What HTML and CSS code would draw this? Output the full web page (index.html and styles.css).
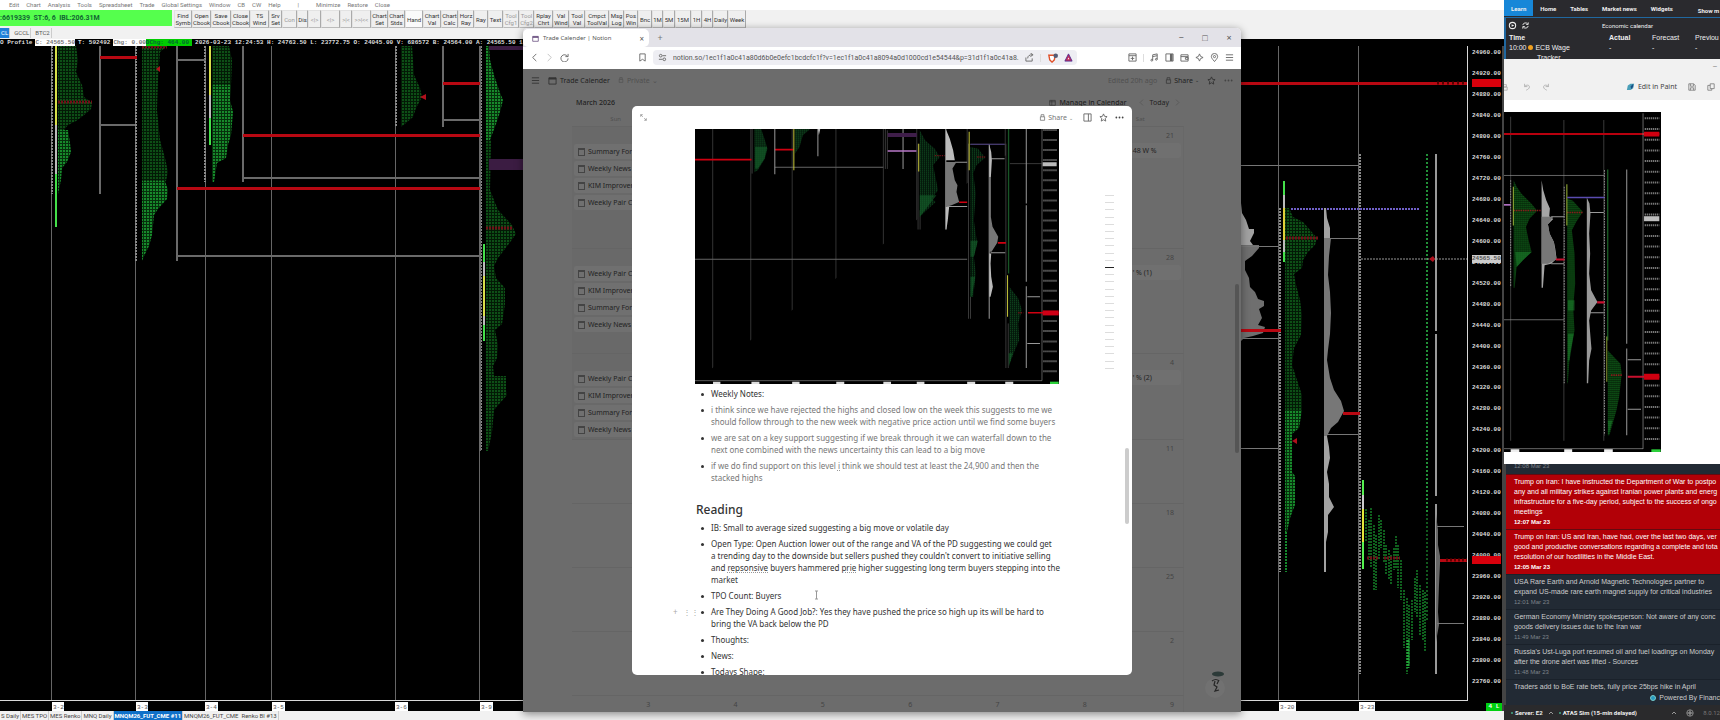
FILE: index.html
```html
<!DOCTYPE html>
<html lang="en">
<head>
    <meta charset="UTF-8">
    <meta name="viewport" content="width=device-width, initial-scale=1.0">
    <title>Trade Calender | Notion</title>
    <link rel="stylesheet" href="styles.css">
</head>
<body>
    <!-- Charting platform -->
    <main class="platform">
        <nav class="menubar">
            <a href="#">Edit</a><a href="#">Chart</a><a href="#">Analysis</a><a href="#">Tools</a><a href="#">Spreadsheet</a><a href="#">Trade</a><a href="#">Global Settings</a><a href="#">Window</a><a href="#">CB</a><a href="#">CW</a><a href="#">Help</a><span class="bar">|</span><a href="#">Minimize</a><a href="#">Restore</a><a href="#">Close</a>
        </nav>

        <div class="toolbar">
            <div class="feed">:6619339&nbsp; ST:6, 6&nbsp; IBL:206.31M</div>
            <button>Find<br>Symb</button>
            <button>Open<br>Cbook</button>
            <button>Save<br>Cbook</button>
            <button>Close<br>Cbook</button>
            <button>TS<br>Wind</button>
            <button>Srv<br>Set</button>
            <button class="off">Con</button>
            <button>Dis</button>
            <button class="off">&lt;|&gt;</button>
            <button class="off">&lt;|&gt;</button>
            <button class="off">&gt;|&lt;</button>
            <button class="off">&gt;&gt;|&lt;&lt;</button>
            <button>Chart<br>Set</button>
            <button>Chart<br>Stds</button>
            <button class="pressed">Hand</button>
            <button>Chart<br>Val</button>
            <button>Chart<br>Calc</button>
            <button>Horz<br>Ray</button>
            <button>Ray</button>
            <button>Text</button>
            <button class="off">Tool<br>Cfg1</button>
            <button class="off">Tool<br>Cfg2</button>
            <button>Rplay<br>Chrt</button>
            <button>Val<br>Wind</button>
            <button>Tool<br>Val</button>
            <button>Cmpct<br>ToolVal</button>
            <button>Msg<br>Log</button>
            <button>Pos<br>Win</button>
            <button>Bnc</button>
            <button>1M</button>
            <button>5M</button>
            <button>15M</button>
            <button>1H</button>
            <button>4H</button>
            <button>Daily</button>
            <button>Week</button>
        </div>

        <nav class="chart-tabs">
            <a href="#" class="active">CL</a><a href="#">GCCL</a><a href="#">BTC2</a>
        </nav>

        <div class="quote"><span>O Profile</span><span class="light">C: 24565.50</span><span>T: 592492</span><span class="light">Chg: 0.00</span><span class="up">DChg: 464.00</span><span>2026-03-23 12:24:53 H: 24763.50 L: 23772.75 O: 24045.00 V: 686572 B: 24564.00 A: 24565.50 1</span></div>

        <section class="chart">
            <svg class="plot" viewBox="0 46 1468 665" preserveAspectRatio="xMinYMin slice">
                <defs>
                    <pattern id="tpo" width="3" height="3" patternUnits="userSpaceOnUse">
                        <rect width="3" height="3" fill="#031a06"/>
                        <rect width="2" height="2" fill="#0d4f16"/>
                    </pattern>
                    <pattern id="tpoHi" width="3" height="3" patternUnits="userSpaceOnUse">
                        <rect width="3" height="3" fill="#06300c"/>
                        <rect width="2" height="2" fill="#178a2b"/>
                    </pattern>
                </defs>
                <rect x="0" y="46" width="1468" height="665" fill="#000"/>

                <!-- session dividers -->
                <g class="grid">
                    <path d="M51 46V701M135 46V701M205 46V701M271 46V701M395 46V701M479 46V701M1278 46V701M1358 46V701"/>
                </g>
                <g class="price-col">
                    <path d="M52 46V194M136 46V261M205 46V182M396 46V127M481 46V451M1280 208V572M1360 154V674"/>
                </g>

                <!-- 3-2 -->
                <path fill="url(#tpo)" d="M58 46H76L78 60L76 72L82 85L84 97L92 103L91 109L83 116L76 121L68 125L64 130H58z"/>
                <path fill="url(#tpoHi)" d="M58 130H68L70 143L71 152L67 162L62 168L61 180L58 194z"/>
                <path class="poc" d="M58 102H92"/>
                <path class="va" stroke="#d8e04a" d="M56 46V125"/>
                <path class="va" stroke="#bbb" d="M56 125V174"/>
                <path class="va" stroke="#44e04a" d="M56 174V227"/>

                <!-- 3-3 -->
                <path fill="url(#tpo)" d="M142 46H167L160 52L158 80L157 110L160 140L165 158L168 172L166 181H142z"/>
                <path fill="url(#tpoHi)" d="M142 181H165L168 190L167 199L158 209L154 215L152 235L149 246L144 256L142 261z"/>
                <path class="poc" d="M142 47H167"/>
                <path class="mark" d="M156 69l4-3v6z"/>

                <!-- 3-4 -->
                <path fill="url(#tpo)" d="M212 46H229L232 60L231 85H212z"/>
                <path fill="url(#tpoHi)" d="M212 85H231L230 100L233 112L231 135L228 145L226 158L217 163L214 182H212z"/>
                <path class="va" stroke="#d8e04a" d="M210 46V95"/>
                <path class="va" stroke="#bbb" d="M210 95V118"/>
                <path class="va" stroke="#44e04a" d="M210 118V145"/>

                <!-- 3-6 -->
                <path fill="url(#tpo)" d="M401 46H412L414 75L420 88L422 97L416 108L413 117L406 123L401 127z"/>
                <path class="mark" d="M420 97l6-3v6z"/>

                <!-- 3-9 -->
                <path fill="url(#tpoHi)" d="M486 46H489L490 60L494 75L499 90L503 100L500 112L496 124L490 140H486z"/>
                <path fill="url(#tpo)" d="M486 140H491L490 190L498 210L512 225L516 234L508 245L498 258L494 266L496 278L505 288L505 304L502 324L495 330L498 345L497 358L493 366L494 376H506V390L507 395L500 403L494 410L492 432L488 451H486z"/>
                <path class="poc" d="M486 228H512"/>
                <path class="va" stroke="#44e04a" d="M484 244V262M484 325V341"/>
                <path class="va" stroke="#bbb" d="M484 262V276M484 316V325"/>
                <path class="va" stroke="#d8e04a" d="M484 276V316"/>
                <rect x="489" y="46" width="40" height="4" fill="#3b1c42"/>
                <rect x="489" y="159" width="40" height="11" fill="#3b1c42"/>

                <!-- volume levels on the left -->
                <g class="level">
                    <path d="M100 46V194M100 125H135M177 46V261M177 60H205M177 256H480M243 46V182M243 178H480M443 46V127M443 120H480M480 46V451"/>
                </g>
                <g class="red-level">
                    <path d="M100 57H137M177 188H480M243 135H480M443 83H480M1241 83H1468"/>
                </g>
                <path stroke="#500" stroke-width="3" stroke-dasharray="2 3" d="M1437 83H1468"/>

                <!-- 3-19, partly behind the browser -->
                <path fill="#a2a2a2" d="M1241 203L1242 213L1246 220L1249 229H1254V233L1250 241L1253 245H1241z"/>
                <path fill="#6f6f6f" d="M1241 245H1259V248L1252 256L1245 261L1245 270L1249 278L1250 287L1255 292L1258 299L1264 301V306L1259 309L1262 318L1258 325L1265 327L1263 333L1253 336L1244 338L1241 341z"/>
                <path class="level" d="M1241 165H1359M1241 246H1279M1241 338H1279M1241 448H1278"/>
                <path class="red-level" d="M1241 330H1281"/>

                <!-- 3-20 -->
                <path fill="url(#tpo)" d="M1285 208H1289L1293 217L1303 222L1310 230L1317 238L1315 245L1308 252L1303 260L1302 268L1294 274L1296 285L1300 300L1302 315L1301 335L1294 348L1292 365L1297 380L1302 395V410H1285z"/>
                <path fill="url(#tpoHi)" d="M1285 410H1302L1299 428L1292 434V472L1295 476V505L1290 518L1287 532H1285z"/>
                <path stroke="#148a2c" stroke-width="2" stroke-dasharray="2 1" d="M1286 532V572"/>
                <path class="poc" d="M1286 238H1318"/>
                <path class="va" stroke="#44e04a" d="M1284 181V195M1284 252V262"/>
                <path class="va" stroke="#bbb" d="M1284 195V208M1284 240V252"/>
                <path class="va" stroke="#e0cf3a" d="M1284 208V240"/>
                <path stroke="#7060c8" stroke-width="2" stroke-dasharray="2 1" d="M1291 209H1419"/>
                <path class="mark" d="M1292 441l5-3v6z"/>
                <path fill="#a2a2a2" d="M1324 208H1326L1327 218L1330 228V238H1324zM1324 436H1327L1329 447L1330 458L1327 472L1329 484L1329 497L1334 507L1328 515L1328 532L1326 542V572H1324z"/>
                <path fill="#777" d="M1324 238H1331L1329 256L1328 275L1330 292L1331 313L1330 334L1328 350L1327 360L1330 378L1334 390L1341 401L1344 411L1338 422L1331 428L1327 436H1324z"/>
                <path class="level" d="M1330 238H1358M1327 434H1358"/>
                <path class="red-level" d="M1343 413H1360"/>

                <!-- 3-23 -->
                <path fill="none" stroke="#0f5f1d" stroke-width="2" stroke-dasharray="2 1" d="M1366 509V542M1369 520V560M1371 508V568M1374 525V590M1376 535V590M1379 515V560M1381 520V548M1384 530V562M1386 545V575M1389 550V580M1391 555V585M1394 548V570M1396 536V568M1398 545V588M1401 560V600M1404 590V648M1407 598V674M1409 605V665M1412 600V640M1415 578V612M1417 570V618M1420 585V636M1423 590V640M1425 592V652"/>
                <path stroke="#22a038" stroke-width="3" stroke-dasharray="2 1" d="M1408 640V668"/>
                <path class="poc" d="M1367 558H1378M1384 558H1400"/>
                <path class="va" stroke="#55f050" d="M1363 480V495M1363 542V569"/>
                <path class="va" stroke="#ccc" d="M1363 495V509"/>
                <path class="va" stroke="#e6e63a" d="M1363 509V542"/>
                <path stroke="#229038" stroke-width="2" stroke-dasharray="2 2" d="M1427 154V514"/>
                <path stroke="#125a1e" stroke-width="2" stroke-dasharray="2 2" d="M1427 514V620"/>
                <path stroke="#999" stroke-width="2" d="M1436 154V331M1436 334V496M1436 504V674"/>
                <path fill="#666" d="M1436 514L1438 530L1438 545L1440 556V564L1439 585L1438 612L1439 625L1437 636L1436 642z"/>
                <path class="level" d="M1437 526H1464M1437 623H1464"/>
                <path stroke="#999" stroke-width="1" stroke-dasharray="2 1" d="M1361 259H1468"/>
                <path class="mark" d="M1429 259l4-3 2 3-2 3z"/>
                <path class="red-level" d="M1440 560H1468"/>
                <path stroke="#600" stroke-width="3" stroke-dasharray="2 2" d="M1446 560H1468"/>

                <!-- time axis -->
                <path stroke="#d8d8d8" stroke-width="1" d="M0 700.5H1468M1467.500 46V701"/>
                <g class="date-box">
                    <rect x="52" y="702" width="12" height="9"/><rect x="136" y="702" width="12" height="9"/><rect x="205" y="702" width="13" height="9"/><rect x="272" y="702" width="13" height="9"/><rect x="395" y="702" width="13" height="9"/><rect x="480" y="702" width="13" height="9"/><rect x="1279" y="702" width="17" height="9"/><rect x="1359" y="702" width="16" height="9"/>
                </g>
                <g class="date">
                    <text x="53" y="709">3-2</text><text x="137" y="709">3-3</text><text x="206" y="709">3-4</text><text x="273" y="709">3-5</text><text x="396" y="709">3-6</text><text x="481" y="709">3-9</text><text x="1280" y="709">3-20</text><text x="1360" y="709">3-23</text>
                </g>
            </svg>

            <aside class="axis">
                <ol class="prices">
                    <li>24960.00</li><li>24920.00</li><li>24880.00</li><li>24840.00</li><li>24800.00</li><li>24760.00</li><li>24720.00</li><li>24680.00</li><li>24640.00</li><li>24600.00</li><li>24560.00</li><li>24520.00</li><li>24480.00</li><li>24440.00</li><li>24400.00</li><li>24360.00</li><li>24320.00</li><li>24280.00</li><li>24240.00</li><li>24200.00</li><li>24160.00</li><li>24120.00</li><li>24080.00</li><li>24040.00</li><li>24000.00</li><li>23960.00</li><li>23920.00</li><li>23880.00</li><li>23840.00</li><li>23800.00</li><li>23760.00</li>
                </ol>
                <span class="tag tag-high"></span>
                <span class="tag tag-last">24565.50</span>
                <span class="tag tag-poc"></span>
                <span class="tag tag-pos">4 L</span>
            </aside>
        </section>

        <nav class="sheet-tabs">
            <a href="#">S Daily</a><a href="#">MES TPO</a><a href="#">MES Renko</a><a href="#">MNQ Daily</a><a href="#" class="active">MNQM26_FUT_CME #11</a><a href="#">MNQM26_FUT_CME&nbsp; Renko Bl #13</a>
        </nav>
    </main>

    <!-- Right hand windows -->
    <aside class="side">
        <section class="econ">
            <nav class="econ-tabs">
                <a href="#" class="active">Learn</a><a href="#">Home</a><a href="#">Tables</a><a href="#">Market news</a><a href="#">Widgets</a><a href="#" class="more">Show m</a>
            </nav>
            <div class="econ-body">
                <header class="econ-head">
                    <svg viewBox="0 0 10 10"><circle cx="5" cy="5" r="3.500" fill="none" stroke="#eee" stroke-width="1.200"/><path d="M4 3.500L7 5 4 6.500z" fill="#eee"/></svg>
                    <svg viewBox="0 0 10 10"><path d="M2 4.500a3 3 0 0 1 5.500-1M8 5.500a3 3 0 0 1-5.500 1M8 1.500v2.300H5.700M2 8.500V6.200h2.300" fill="none" stroke="#eee"/></svg>
                    <h2>Economic calendar</h2>
                </header>
                <table>
                    <tr><th class="c-time">Time</th><th class="c-act">Actual</th><th class="c-fore">Forecast</th><th>Previou</th></tr>
                    <tr><td>10:00 <i class="dot"></i> ECB Wage</td><td>-</td><td>-</td><td>-</td></tr>
                    <tr><td class="indent">Tracker</td><td></td><td></td><td></td></tr>
                </table>
            </div>
        </section>

        <section class="snip">
            <div class="snip-title">&ndash;</div>
            <div class="snip-bar">
                <svg class="ic cut" viewBox="0 0 10 10"><path d="M0 2h3v3H0M0 5h4v4H0" /></svg>
                <svg class="ic" viewBox="0 0 10 10"><path d="M2 1v3.500h3.500M2 4.500C4 2 8 2 8 5c0 2-2 3-4 4"/></svg>
                <svg class="ic" viewBox="0 0 10 10"><path d="M8 1v3.500H4.500M8 4.500C6 2 2 2 2 5c0 2 2 3 4 4"/></svg>
                <button class="paint"><svg viewBox="0 0 10 10"><path d="M2 4L5 2h4L8 7 5 9H1z" fill="#4a9fb8"/><path d="M5 5l3-3v3L6 8z" fill="#1a4f86"/></svg>Edit in Paint</button>
                <svg class="ic dark" viewBox="0 0 10 10"><path d="M1 1h6l2 2v6H1zM3 1v3h4V1M3 9V6h4v3"/></svg>
                <svg class="ic dark" viewBox="0 0 10 10"><path d="M4 1h5v6H4zM4 3H1v6h5V7"/></svg>
            </div>
            <div class="snip-view">
                <svg class="shot" viewBox="28 336 472 1018" preserveAspectRatio="none">
                    <defs>
                        <pattern id="tpoS" width="6" height="6" patternUnits="userSpaceOnUse"><rect width="6" height="6" fill="#041c06"/><rect width="4" height="4" fill="#0f5a18"/></pattern>
                    </defs>
                    <rect x="28" y="336" width="472" height="1018" fill="#000"/>
                    <path stroke="#3a3a3a" stroke-width="3" d="M48 350V1320M208 360V1320M328 360V1320"/>
                    <path stroke="#b8000e" stroke-width="6" d="M28 402H495"/>
                    <path stroke="#999" stroke-width="2" d="M28 526H330M28 958H208M446 340V1345M28 1344H446"/>
                    <path stroke="#8e8e8e" stroke-width="3" stroke-dasharray="5 3" d="M48 540V860M209 560V1148M330 510V1304"/>
                    <path fill="url(#tpoS)" d="M57 540L66 560 80 580 110 610 128 632 105 655 94 680 102 720 111 755 85 780 66 800 60 862H57zM218 595L235 602 265 635 245 665 232 690 240 760 242 850 236 920 240 990 226 1060 220 1148H218zM340 1050L378 1090 382 1120 374 1190 366 1230 345 1304H340z"/>
                    <path fill="#1d8a30" opacity=".5" d="M62 755H111L85 780 66 800zM220 900H240V930H220zM220 1000H238L225 1080H220zM340 1260H354L342 1304z"/>
                    <path stroke="#93151c" stroke-width="5" stroke-dasharray="4 3" d="M57 631H140M218 637H265M350 1124H382"/>
                    <path stroke="#9fb83a" stroke-width="3" d="M56 560V676M217 552V676"/>
                    <path stroke="#237a30" stroke-width="3" d="M340 508V1020"/>
                    <path stroke="#8a9f34" stroke-width="3" d="M337 1008V1144"/>
                    <path fill="#a5a5a5" d="M141 540L146 570 155 600 166 625 164 648 176 656 160 672 165 700 178 725 182 745 186 775 170 790 150 795 145 862H141z"/>
                    <path fill="#777" d="M141 650H176L160 672 165 700 178 725 186 778 160 790H141z"/>
                    <path fill="#999" d="M277 592L285 610 288 640 284 700 287 760 284 820 290 870 309 905 290 930 284 960 288 1010 291 1045 284 1080 281 1148H277z"/>
                    <path stroke="#999" stroke-width="3" d="M397 508V1030M397 1044V1304M170 650H210M170 790H208M286 637H328M286 937H328M400 1078H440M400 1226H440"/>
                    <path stroke="#5a4bb0" stroke-width="4" d="M218 592H330"/>
                    <path stroke="#c8102e" stroke-width="6" d="M184 778H210M308 906H330M400 1129H495"/>
                    <path stroke="#b070c0" stroke-width="5" d="M28 614H48"/>
                    <path stroke="#d5d5d5" stroke-width="6" stroke-dasharray="4 2" opacity=".55" d="M451 355H495M451 387H495M451 419H495M451 451H495M451 483H495M451 515H495M451 547H495M451 579H495M451 611H495M451 643H495M451 675H495M451 707H495M451 739H495M451 771H495M451 803H495M451 835H495M451 867H495M451 899H495M451 931H495M451 963H495M451 995H495M451 1027H495M451 1059H495M451 1091H495M451 1155H495M451 1187H495M451 1219H495M451 1251H495M451 1283H495M451 1315H495"/>
                    <path fill="#bdbdbd" d="M449 648H495V663H449z"/>
                    <path fill="#d00010" d="M449 395H495V409H449zM449 1120H495V1138H449z"/>
                    <path fill="#eee" d="M48 1346H74V1354H48zM209 1346H233V1354H209zM329 1346H355V1354H329z"/>
                    <path fill="#2bd03a" d="M471 1346H499V1354H471z"/>
                </svg>
            </div>
        </section>

        <section class="news">
            <time class="cut-time">12:08 Mar 23</time>
            <article class="hot"><p>Trump on Iran: I have instructed the Department of War to postpo<br>any and all military strikes against Iranian power plants and energ<br>infrastructure for a five-day period, subject to the success of ongo<br>meetings</p><time>12:07 Mar 23</time></article>
            <article class="hot"><p>Trump on Iran: US and Iran, have had, over the last two days, ver<br>good and productive conversations regarding a complete and tota<br>resolution of our hostilities in the Middle East.</p><time>12:05 Mar 23</time></article>
            <article><p>USA Rare Earth and Arnold Magnetic Technologies partner to<br>expand US-made rare earth magnet supply for critical industries</p><time>12:01 Mar 23</time></article>
            <article><p>German Economy Ministry spokesperson: Not aware of any conc<br>goods delivery issues due to the Iran war</p><time>11:49 Mar 23</time></article>
            <article><p>Russia's Ust-Luga port resumed oil and fuel loadings on Monday<br>after the drone alert was lifted - Sources</p><time>11:48 Mar 23</time></article>
            <article><p>Traders add to BoE rate bets, fully price 25bps hike in April</p></article>
            <div class="powered"><i></i>Powered By Financ</div>
        </section>

        <footer class="status">
            <i></i><span>Server: E2</span>
            <svg viewBox="0 0 6 6"><path d="M1 4l2-2 2 2"/></svg>
            <i></i><span>ATAS Sim (15-min delayed)</span>
            <svg class="push" viewBox="0 0 6 6"><path d="M1 4l2-2 2 2"/></svg>
            <svg class="globe" viewBox="0 0 10 10"><circle cx="5" cy="5" r="4"/><circle cx="5" cy="5" r="1.500"/><path d="M1 5h8M5 1v8"/></svg>
            <span class="ver">8.0.12</span>
        </footer>
    </aside>

    <!-- Browser window -->
    <section class="browser">
        <header class="strip">
            <div class="tab">
                <svg class="ic" viewBox="0 0 10 10"><path d="M1 2h8v7H1z"/><path d="M1 3h8" stroke-width="2"/></svg>
                <span>Trade Calender | Notion</span>
                <button>&times;</button>
            </div>
            <button class="new-tab">+</button>
            <div class="win-buttons"><button>&minus;</button><button>&#9633;</button><button>&times;</button></div>
        </header>

        <div class="navbar">
            <svg class="ic" viewBox="0 0 10 10"><path d="M7 1L3 5l4 4"/></svg>
            <svg class="ic faint" viewBox="0 0 10 10"><path d="M3 1l4 4-4 4"/></svg>
            <svg class="ic" viewBox="0 0 10 10"><path d="M8.500 4A4 4 0 1 0 9 6M9 1v3H6"/></svg>
            <svg class="ic mark-ic" viewBox="0 0 10 10"><path d="M2 1h6v8L5 7 2 9z"/></svg>
            <div class="url">
                <svg class="ic" viewBox="0 0 10 10"><circle cx="3" cy="3" r="1.500"/><path d="M5 3h4M1 7h4"/><circle cx="7" cy="7" r="1.500"/></svg>
                <input type="text" aria-label="Address" value="notion.so/1ec1f1a0c41a80d6b0e0efc1bcdcfc1f?v=1ec1f1a0c41a8094a0d1000cd1e54544&amp;p=31d1f1a0c41a8...">
                <svg class="ic" viewBox="0 0 10 10"><path d="M1 5v4h7V6M3 6c0-3 2-4 5-4M6 0l3 2-3 2"/></svg>
                <i class="sep"></i>
                <svg class="ic shield" viewBox="0 0 12 10"><path d="M2 2h7L8 7 5.500 9.500 3 7z" fill="#fff" stroke="#e0522b" stroke-width="1.500"/><circle cx="9.500" cy="2.500" r="2.500" fill="#555b75" stroke="none"/></svg>
                <svg class="ic" viewBox="0 0 10 10"><path d="M5 1l4 8H1z" fill="#c22b5a" stroke="#512c8f" stroke-width="1"/><path d="M5 5l1 2H4z" fill="#fff" stroke="none"/></svg>
            </div>
            <svg class="ic push" viewBox="0 0 10 10"><path d="M1 1h8v8H1zM1 3h8M5 4v4M3 6h4"/></svg>
            <i class="sep"></i>
            <svg class="ic" viewBox="0 0 10 10"><path d="M3 8V2l5-1v6M3 4l5-1"/><circle cx="2" cy="8" r="1"/><circle cx="7" cy="7" r="1"/></svg>
            <svg class="ic" viewBox="0 0 10 10"><path d="M1 1h8v8H1z"/><path d="M7 1v8" stroke-width="3"/></svg>
            <svg class="ic" viewBox="0 0 10 10"><path d="M1 2h8v7H1zM1 4h8M6 5h3v2H6z"/></svg>
            <svg class="ic" viewBox="0 0 10 10"><path d="M5 1l1.200 2.800L9 5 6.200 6.200 5 9 3.800 6.200 1 5l2.800-1.200z"/></svg>
            <svg class="ic" viewBox="0 0 10 10"><path d="M5 9.500C2 6 1.500 5 1.500 4a3.500 3.500 0 0 1 7 0C8.500 5 8 6 5 9.500z"/><circle cx="5" cy="4" r="1.200"/></svg>
            <svg class="ic" viewBox="0 0 10 10"><path d="M1 2h8M1 5h8M1 8h8"/></svg>
        </div>

        <div class="page">
            <div class="topbar">
                <svg class="ic" viewBox="0 0 10 10"><path d="M1 2h8M1 5h8M1 8h8"/></svg>
                <svg class="ic cal" viewBox="0 0 10 10"><path d="M1 2h8v7H1z"/><path d="M1 3h8" stroke-width="2"/></svg>
                <span class="name">Trade Calender</span>
                <svg class="ic lock" viewBox="0 0 10 10"><path d="M2 4h6v5H2zM3 4V1h4v3"/></svg>
                <span class="dim">Private &#8964;</span>
                <span class="dim push">Edited 20h ago</span>
                <button class="share"><svg class="ic" viewBox="0 0 10 10"><path d="M2 4h6v5H2zM3 4V1h4v3"/></svg>Share <small>&#8964;</small></button>
                <svg class="ic" viewBox="0 0 10 10"><path d="M5 1l1.200 2.700 2.800.3-2.100 2 .6 3L5 7.500 2.500 9l.6-3L1 4l2.800-.3z"/></svg>
                <svg class="ic fill" viewBox="0 0 10 10"><circle cx="1.500" cy="5" r="1"/><circle cx="5" cy="5" r="1"/><circle cx="8.500" cy="5" r="1"/></svg>
            </div>

            <div class="month">
                <h2>March 2026</h2>
                <button class="manage"><svg class="ic" viewBox="0 0 10 10"><path d="M1 2h8v7H1zM1 4h8M4 2v7"/></svg>Manage in Calendar</button>
                <svg class="ic faint" viewBox="0 0 10 10"><path d="M7 1L3 5l4 4"/></svg>
                <span>Today</span>
                <svg class="ic faint" viewBox="0 0 10 10"><path d="M3 1l4 4-4 4"/></svg>
            </div>

            <div class="weekdays"><span>Sun</span><span class="sat">Sat</span></div>

            <div class="weeks">
                <div class="week w1">
                    <div class="sun"><p>Summary For</p><p>Weekly News</p><p>KIM Improver</p><p>Weekly Pair C</p></div>
                    <div class="sat"><b>21</b><p>48 W %</p></div>
                </div>
                <div class="week w2">
                    <div class="sun"><p>Weekly Pair C</p><p>KIM Improver</p><p>Summary For</p><p>Weekly News</p></div>
                    <div class="sat"><b>28</b><p>' % (1)</p></div>
                </div>
                <div class="week w3">
                    <div class="sun"><p>Weekly Pair C</p><p>KIM Improver</p><p>Summary For</p><p>Weekly News</p></div>
                    <div class="sat"><b>4</b><p>' % (2)</p></div>
                </div>
                <div class="week w4"><div class="sat"><b>11</b></div></div>
                <div class="week w4"><div class="sat"><b>18</b></div></div>
                <div class="week w4"><div class="sat"><b>25</b></div></div>
                <div class="week w4"><div class="sat"><b>2</b></div></div>
                <div class="week last"><b>3</b><b>4</b><b>5</b><b>6</b><b>7</b><b>8</b><b>9</b></div>
            </div>

            <i class="page-thumb"></i>
            <svg class="mascot" viewBox="0 0 24 30"><circle cx="10" cy="18" r="10" fill="#717171"/><ellipse cx="13" cy="4" rx="6" ry="2.500" fill="#2c3a38"/><path d="M7 11q4-3 7 0M10 11l-1 4 3 2-2 4 4-1M14 10l-2 4" fill="none" stroke="#262626" stroke-width="1.200"/></svg>

            <!-- Peek view -->
            <article class="peek">
                <header class="peek-bar">
                    <svg class="ic expand" viewBox="0 0 10 10"><path d="M1 4V1h3M1 1l3 3M9 6v3H6M9 9L6 6"/></svg>
                    <button class="share push"><svg class="ic" viewBox="0 0 10 10"><path d="M2 4h6v5H2zM3 4V1h4v3"/></svg>Share <small>&#8964;</small></button>
                    <svg class="ic" viewBox="0 0 10 10"><path d="M1 1h8v8H1zM6 1v8"/></svg>
                    <svg class="ic" viewBox="0 0 10 10"><path d="M5 1l1.200 2.700 2.800.3-2.100 2 .6 3L5 7.500 2.500 9l.6-3L1 4l2.800-.3z"/></svg>
                    <svg class="ic fill" viewBox="0 0 10 10"><circle cx="1.500" cy="5" r="1"/><circle cx="5" cy="5" r="1"/><circle cx="8.500" cy="5" r="1"/></svg>
                </header>

                <div class="doc">
                    <svg class="figure" viewBox="17 56 1090 766" preserveAspectRatio="none">
                        <defs>
                            <pattern id="tpoF" width="6" height="6" patternUnits="userSpaceOnUse"><rect width="6" height="6" fill="#03150a"/><rect width="4" height="4" fill="#0e421c"/></pattern>
                        </defs>
                        <rect x="17" y="56" width="1090" height="766" fill="#000"/>
                        <path stroke="#333" stroke-width="3" d="M70 56V812M184 56V812M308 56V812M439 56V812M581 56V812M681 56V812M832 56V812M946 56V812"/>
                        <path stroke="#888" stroke-width="2" d="M17 812H1056V56"/>
                        <path stroke="#666" stroke-width="3" d="M17 447H832M256 171H581"/>
                        <path stroke="#555" stroke-width="2" d="M188 56V190M587 56V176M593 60V176M685 100V358M691 300V358M836 100V626M842 560V626M948 100V774M955 640V774M840 102H946M960 160H1056"/>
                        <path fill="url(#tpoF)" d="M195 56H215L225 85 234 115 226 145 205 180 195 186zM316 56H362L340 75 330 110 316 130zM690 60L706 90 735 115 750 140 730 165 740 215 745 240 725 265 738 275 705 305 690 320zM842 110L865 115 886 142 860 165 850 190 858 250 852 330 862 400 852 440 858 490 850 560H842zM958 530L985 565 996 600 985 640 988 690 975 720 958 765z"/>
                        <path fill="#16602c" opacity=".6" d="M197 110H233L225 145 205 175H197zM690 255H740L705 300 690 320zM842 392H864L852 440H842zM842 500H856L846 560H842zM956 730H968L957 770z"/>
                        <path stroke="#d00010" stroke-width="5" d="M17 148H186M256 118H312M808 276H832M924 398H948M1014 608H1106"/>
                        <path stroke="#c9c93a" stroke-width="3" d="M313 56V180M838 64V180M687 100V184M953 495V620"/>
                        <path stroke="#999" stroke-width="3" d="M256 56V192M385 56V138M640 56V176M768 56V358M898 102V626M1009 56V280M1009 285V515M1009 528V774M795 156H832M770 289H832M904 145H944M902 428H946M1012 560H1050M1012 700H1050"/>
                        <path fill="#3f1e4a" d="M594 68H681V80H594z"/>
                        <path stroke="#b878c8" stroke-width="4" d="M594 122H680"/>
                        <path stroke="#175525" stroke-width="4" d="M956 56V490"/>
                        <path fill="#bbb" d="M768 56L780 85 790 120 795 150H768zM768 290H778L774 330 770 358H768zM898 102L904 125 906 150 903 200H898zM898 430H904L902 460 904 500 909 530 902 560H898zM385 56H392L388 75z"/>
                        <path fill="#777" d="M768 155H800L788 175 795 210 803 225 800 245 808 275 785 285 768 290zM898 200H903V320L908 350 925 380 922 398 905 425H898z"/>
                        <path fill="none" stroke="#4b3d80" stroke-width="3" d="M842 102H944"/>
                        <path stroke="#6e1016" stroke-width="4" stroke-dasharray="4 3" d="M735 136H765M985 608H1000M862 140H886"/>
                        <path stroke="#c8c8c8" stroke-width="6" stroke-dasharray="4 2" opacity=".55" d="M1060 59H1101M1060 89H1101M1060 119H1101M1060 149H1101M1060 180H1101M1060 210H1101M1060 240H1101M1060 271H1101M1060 301H1101M1060 331H1101M1060 361H1101M1060 391H1101M1060 421H1101M1060 452H1101M1060 482H1101M1060 512H1101M1060 542H1101M1060 572H1101M1060 633H1101M1060 663H1101M1060 694H1101M1060 724H1101M1060 754H1101M1060 784H1101"/>
                        <path fill="#bbb" d="M1058 156H1100V168H1058z"/>
                        <path fill="#d00016" d="M1058 601H1106V616H1058z"/>
                        <path fill="#ddd" d="M71 815H93V822H71zM186 815H210V822H186zM308 815H330V822H308zM440 815H464V822H440zM581 815H604V822H581zM681 815H704V822H681zM832 815H856V822H832zM946 815H970V822H946z"/>
                        <path fill="#2bd03a" d="M1080 815H1106V822H1080z"/>
                    </svg>
                    <ul>
                        <li>Weekly Notes:</li>
                        <li class="soft">i think since we have rejected the highs and closed low on the week this suggests to me we<br>should follow through to the new week with negative price action until we find some buyers</li>
                        <li class="soft">we are sat on a key support suggesting if we break through it we can waterfall down to the<br>next one combined with the news uncertainty this can lead to a big move</li>
                        <li class="soft">if we do find support on this level <u>i</u> think we should test at least the 24,900 and then the<br>stacked highs</li>
                    </ul>
                    <h3>Reading</h3>
                    <ul>
                        <li>IB: Small to average sized suggesting a big move or volatile day</li>
                        <li>Open Type: Open Auction lower out of the range and VA of the PD suggesting we could get<br>a trending day to the downside but sellers pushed they couldn't convert to initiative selling<br>and <u>repsonsive</u> buyers hammered <u>prie</u> higher suggesting long term buyers stepping into the<br>market</li>
                        <li>TPO Count: Buyers<svg class="caret" viewBox="0 0 5 10"><path d="M1 1h3M1 9h3M2.500 1v8"/></svg></li>
                        <li><span class="handle">+ <span>&#8942;&#8942;</span></span>Are They Doing A Good Job?: Yes they have pushed the price so high up its will be hard to<br>bring the VA back below the PD</li>
                        <li>Thoughts:</li>
                        <li>News:</li>
                        <li>Todays Shape:</li>
                    </ul>
                </div>

                <div class="outline">
                    <i></i><i></i><i></i><i></i><i></i><i></i><i></i><i></i><i></i><i></i><i class="here"></i><i></i><i></i><i></i><i></i><i></i><i></i><i></i><i></i><i></i><i></i><i></i><i></i><i></i><i></i>
                </div>
                <i class="peek-thumb"></i>
            </article>
        </div>
    </section>
</body>
</html>
```
FILE: styles.css
```css
* {
    box-sizing: border-box;
    margin: 0;
    padding: 0;
}

body {
    height: 100vh;
    display: grid;
    grid-template-columns: minmax(0, 1fr) 216px;
    position: relative;
    overflow: hidden;
    background: #000;
    font-family: "Noto Sans", "Open Sans", sans-serif;
    font-size: 7px;
    white-space: nowrap;
}

a {
    color: inherit;
    text-decoration: none;
}

button {
    border: none;
    background: none;
    font: inherit;
    color: inherit;
}

ul, ol {
    list-style: none;
}

.ic {
    width: 9px;
    height: 9px;
    flex: none;
    fill: none;
    stroke: #666;
    stroke-width: 1;
}

.ic.fill {
    fill: #444;
    stroke: none;
}

.ic.faint {
    opacity: 0.4;
}

.push {
    margin-left: auto;
}

/* Charting platform */
.platform {
    display: flex;
    flex-direction: column;
    height: 100vh;
    min-width: 0;
    overflow: hidden;
    background: #f1f1f1;
    color: #333;
    font-family: Roboto, "Liberation Sans", sans-serif;
    font-size: 6px;
}

.menubar {
    display: flex;
    gap: 7px;
    height: 10px;
    line-height: 10px;
    padding-left: 9px;
    background: #fff;
    color: #777;
}

.menubar .bar {
    padding: 0 10px;
}

.toolbar {
    display: grid;
    grid-template-columns: 174px 18px 19px 20px 19px 19px 13px 15px 11px 13px 19px 12px 19px 17px 17px 18px 18px 17px 16px 14px 15px 16px 15px 19px 16px 16px 24px 15px 14px 14px 11px 12px 16px 11px 11px 15px 18px;
    height: 18px;
    background: #f1f1f1;
}

.feed {
    height: 16px;
    margin-right: 2px;
    background: #55ff4d;
    color: #163;
    font-size: 7px;
    font-weight: bold;
    line-height: 17px;
}

.toolbar button {
    border: 1px solid #e2e2e2;
    border-right-color: #aaa;
    border-bottom-color: #bbb;
    background: #efefef;
    line-height: 7px;
    text-align: center;
}

.toolbar .off {
    color: #999;
}

.toolbar .pressed {
    background: #fafafa;
}

.chart-tabs {
    display: flex;
    gap: 3px;
    height: 11px;
    line-height: 10px;
    color: #555;
}

.chart-tabs a {
    height: 10px;
    padding: 0 1px;
    border-right: 1px solid #ccc;
}

.chart-tabs .active {
    background: #2080d8;
    color: #fff;
}

.quote {
    display: flex;
    height: 7px;
    background: #000;
    color: #ddd;
    font: bold 6px/7px "Liberation Mono", monospace;
}

.quote span {
    padding-right: 3px;
}

.quote .light {
    background: #fff;
    color: #777;
    padding: 0;
    margin-right: 3px;
}

.quote .light + .up {
    background: #0c0;
    color: #063;
    margin-left: -3px;
    margin-right: 3px;
}

.chart {
    flex: 1;
    display: grid;
    grid-template-columns: minmax(0, 1fr) 36px;
    min-height: 0;
    background: #000;
}

.plot {
    display: block;
    width: 100%;
    height: 100%;
}

.grid {
    fill: none;
    stroke: #666;
    stroke-width: 1;
    shape-rendering: crispEdges;
}

.price-col {
    fill: none;
    stroke: #8a8a8a;
    stroke-width: 2;
    stroke-dasharray: 2 1;
}

.level {
    fill: none;
    stroke: #777;
    stroke-width: 1;
    shape-rendering: crispEdges;
}

g.level {
    stroke-width: 2;
    stroke: #6a6a6a;
}

.red-level {
    fill: none;
    stroke: #b80812;
    stroke-width: 3;
    shape-rendering: crispEdges;
}

.va {
    stroke-width: 2;
}

.poc {
    stroke: #701018;
    stroke-width: 3;
    stroke-dasharray: 2 1;
}

.mark {
    fill: #b0101c;
}

.date-box {
    fill: #fff;
}

.date {
    fill: #555;
    font: 6px "Liberation Mono", monospace;
}

.axis {
    position: relative;
    border-right: 2px solid #444;
    color: #ddd;
    font: bold 6px/7px "Liberation Mono", monospace;
}

.prices {
    display: flex;
    flex-direction: column;
    height: 650px;
    margin-top: -4px;
}

.prices li {
    flex: 1;
    display: flex;
    align-items: center;
    padding-left: 4px;
}

.tag {
    position: absolute;
    left: 4px;
    right: 1px;
    height: 8px;
    background: #d8000c;
}

.tag-high {
    top: 33px;
}

.tag-last {
    top: 209px;
    background: #ccc;
    color: #555;
}

.tag-poc {
    top: 510px;
}

.tag-pos {
    left: 18px;
    right: 0;
    bottom: 0;
    background: #00d010;
    color: #fff;
    text-align: center;
}

.sheet-tabs {
    display: flex;
    height: 9px;
    line-height: 9px;
    color: #444;
}

.sheet-tabs a {
    padding: 0 1px;
    border-right: 1px solid #ccc;
}

.sheet-tabs .active {
    background: #0f70c8;
    color: #fff;
    font-weight: bold;
}

/* Right hand windows */
.side {
    display: flex;
    flex-direction: column;
    height: 100vh;
    min-width: 0;
    overflow: hidden;
    background: #fff;
    font-family: "Liberation Sans", Arial, sans-serif;
}

.econ {
    height: 59px;
    overflow: hidden;
    background: #2a2a2e;
    color: #eee;
}

.econ-tabs {
    display: flex;
    height: 17px;
    font: bold 6px/17px Roboto, sans-serif;
    gap: 14px;
}

.econ-tabs .active {
    padding: 0 7px;
    margin-right: -7px;
    height: 16px;
    background: #1787d8;
}

.econ-tabs .more {
    margin-left: 11px;
    line-height: 22px;
}

.econ-body {
    border-top: 1px solid #2068a0;
    border-left: 2px solid #2068a0;
}

.econ-head {
    display: flex;
    gap: 4px;
    align-items: center;
    height: 15px;
    padding-left: 2px;
}

.econ-head svg {
    width: 9px;
    height: 9px;
}

.econ-head h2 {
    margin-left: 68px;
    font: 6px Roboto, sans-serif;
}

.econ table {
    width: 211px;
    margin-left: 3px;
    table-layout: fixed;
    border-collapse: collapse;
    font: 7px/10px "Liberation Sans", sans-serif;
}

.econ th {
    text-align: left;
    font-weight: normal;
}

.econ .c-time,
.econ .c-act {
    font-weight: bold;
}

.c-time {
    width: 100px;
}

.c-act,
.c-fore {
    width: 43px;
}

.dot {
    display: inline-block;
    width: 5px;
    height: 5px;
    border-radius: 50%;
    background: #f0a020;
}

.econ .indent {
    padding-left: 28px;
}

.snip {
    height: 405px;
    background: #fff;
}

.snip-title {
    height: 14px;
    padding-right: 3px;
    background: #f1f1f1;
    color: #777;
    line-height: 14px;
    text-align: right;
}

.snip-bar {
    display: flex;
    align-items: center;
    gap: 11px;
    height: 27px;
    padding-right: 5px;
    background: #f1f1f1;
    color: #444;
}

.snip-bar .ic {
    width: 8px;
    height: 8px;
    stroke: #aaa;
}

.snip-bar .ic.dark {
    stroke: #777;
}

.paint {
    display: flex;
    align-items: center;
    gap: 3px;
    margin-left: auto;
    font: 7px "Noto Sans", sans-serif;
}

.paint svg {
    width: 9px;
    height: 9px;
}

.snip-view {
    padding-top: 12px;
}

.shot {
    display: block;
    width: 157px;
    height: 340px;
}

.news {
    position: relative;
    flex: 1;
    overflow: hidden;
    border-left: 2px solid #444;
    background: #222a34;
    color: #ccc;
    font-size: 7px;
    line-height: 10px;
}

.news article {
    padding: 3px 0 2px 8px;
    box-shadow: inset 0 1px 0 #1a212a;
}

.news .hot {
    background: #b20007;
    box-shadow: inset 0 1px 0 #640a10;
    color: #fff;
}

.news time {
    display: block;
    color: #7d838a;
    font-size: 6px;
}

.news .hot time {
    color: #fff;
    font-weight: bold;
}

.news .cut-time {
    height: 10px;
    padding-left: 8px;
    line-height: 4px;
}

.powered {
    position: absolute;
    right: 0;
    bottom: 2px;
    display: flex;
    gap: 3px;
    align-items: center;
    background: #222a34;
}

.powered i {
    width: 6px;
    height: 6px;
    border: 1px solid #7cc;
    border-radius: 50%;
    background: #299ac0;
}

.status {
    display: flex;
    align-items: center;
    gap: 5px;
    height: 15px;
    padding-left: 7px;
    background: #2a2a2c;
    color: #eee;
    font: bold 6px Roboto, sans-serif;
}

.status i {
    width: 2px;
    height: 2px;
    margin-right: -3px;
    border-radius: 50%;
    background: #4a8;
}

.status svg {
    width: 6px;
    height: 6px;
    fill: none;
    stroke: #999;
}

.status svg.push {
    margin-left: auto;
}

.status svg.globe {
    width: 8px;
    height: 8px;
    margin: 0 4px;
}

.status .ver {
    color: #777;
    font-weight: normal;
}

/* Browser window */
.browser {
    position: absolute;
    left: 523px;
    right: 479px;
    top: 28px;
    bottom: 8px;
    display: flex;
    flex-direction: column;
    overflow: hidden;
    border-radius: 5px 5px 0 0;
    background: #fff;
    box-shadow: 0 2px 8px rgba(0, 0, 0, 0.45);
}

.strip {
    display: flex;
    height: 19px;
    background: #e3e2e8;
    color: #555;
}

.tab {
    display: flex;
    align-items: center;
    gap: 4px;
    width: 126px;
    height: 18px;
    margin-top: 1px;
    padding: 0 5px 0 9px;
    border-radius: 5px;
    background: #fff;
    font-size: 6px;
}

.tab .ic {
    width: 7px;
    height: 7px;
    stroke: #5a3d72;
}

.tab button {
    margin-left: auto;
    font-size: 8px;
}

.new-tab {
    width: 22px;
    font-size: 9px;
    color: #777;
}

.win-buttons {
    display: flex;
    margin-left: auto;
    font-size: 9px;
}

.win-buttons button {
    width: 24px;
}

.navbar {
    display: flex;
    align-items: center;
    gap: 6px;
    height: 22px;
    padding: 0 7px 1px;
}

.mark-ic {
    margin-left: 63px;
}

.url {
    display: flex;
    align-items: center;
    gap: 6px;
    width: 424px;
    height: 15px;
    padding: 0 4px 0 5px;
    border-radius: 4px;
    background: #eeeef3;
}

.url input {
    flex: 1;
    min-width: 0;
    border: none;
    background: none;
    color: #555;
    font: 7px Roboto, sans-serif;
}

.url .shield {
    width: 11px;
    height: 10px;
}

.sep {
    width: 1px;
    height: 8px;
    background: #ddd;
}

.page {
    position: relative;
    flex: 1;
    overflow: hidden;
    background: #6c6c6c;
    color: #222;
}

.page > div .ic {
    stroke: #333;
}

.page > div .ic.fill {
    stroke: none;
}

.topbar {
    display: flex;
    align-items: center;
    gap: 8px;
    height: 22px;
    padding: 0 8px;
}

.topbar .cal {
    margin-right: -5px;
}

.topbar .lock {
    width: 6px;
    height: 6px;
    margin-right: -5px;
    opacity: 0.5;
}

.dim {
    color: #505050;
}

.share {
    display: flex;
    align-items: center;
    gap: 2px;
}

.share .ic {
    width: 7px;
    height: 7px;
}

.share small {
    font-size: 5px;
}

.month {
    display: flex;
    align-items: center;
    gap: 5px;
    height: 22px;
    padding: 0 60px 0 53px;
}

.month h2 {
    font-size: 7px;
    font-weight: 500;
    margin-right: auto;
}

.month .ic {
    width: 7px;
    height: 7px;
}

.manage {
    display: flex;
    align-items: center;
    gap: 3px;
    margin-right: 6px;
    font-weight: 500;
}

.weekdays,
.week {
    display: grid;
    grid-template-columns: repeat(7, 1fr);
    margin: 0 57px 0 49px;
}

.weekdays {
    height: 13px;
    color: #505050;
    font-size: 6px;
    line-height: 13px;
    text-align: center;
}

.sat {
    grid-column: 7;
}

.week {
    border-top: 1px solid #656565;
    border-right: 1px solid #686868;
}

.week b {
    padding: 4px 9px 0 0;
    color: #444;
    font-weight: normal;
    line-height: 10px;
    text-align: right;
}

.week .sat {
    display: flex;
    flex-direction: column;
}

.week p {
    height: 15px;
    margin: 0 2px 2px;
    border-radius: 2px;
    background: #707070;
    line-height: 15px;
}

.week .sun {
    display: flex;
    flex-direction: column;
    padding-top: 17px;
    background: #696969;
}

.week .sun p {
    display: flex;
    align-items: center;
    gap: 3px;
    padding-left: 4px;
}

/* small page icon before each entry */
.week .sun p::before {
    content: "";
    flex: none;
    width: 5px;
    height: 5px;
    border: 1px solid #444;
    border-top-width: 2px;
}

.week .sat p {
    margin-top: 2px;
    padding-left: 35px;
}

.w1 {
    height: 122px;
}

.w2 {
    height: 105px;
}

.w3 {
    height: 86px;
}

.w4 {
    height: 64px;
}

.last {
    height: 32px;
}

.page-thumb {
    position: absolute;
    right: 2px;
    top: 215px;
    width: 4px;
    height: 169px;
    border-radius: 2px;
    background: #555;
}

.mascot {
    position: absolute;
    right: 12px;
    bottom: 12px;
    width: 24px;
    height: 30px;
}

/* Peek view */
.peek {
    position: absolute;
    left: 109px;
    right: 109px;
    top: 37px;
    bottom: 37px;
    overflow: hidden;
    border-radius: 5px;
    background: #fff;
    color: #333;
}

.peek-bar {
    display: flex;
    align-items: center;
    gap: 7px;
    height: 23px;
    padding: 0 8px;
}

.peek-bar .share {
    padding: 0 3px;
    color: #777;
}

.peek-bar .expand {
    width: 7px;
    height: 7px;
    stroke: #888;
}

.doc {
    width: 364px;
    margin-left: 63px;
    font-size: 8px;
}

.figure {
    display: block;
    width: 364px;
    height: 255px;
    margin-bottom: 4px;
}

.doc li {
    position: relative;
    margin-bottom: 4px;
    padding-left: 16px;
    line-height: 12px;
}

/* bullet */
.doc li::before {
    content: "";
    position: absolute;
    left: 6px;
    top: 5px;
    width: 3px;
    height: 3px;
    border-radius: 50%;
    background: #333;
}

.doc .soft {
    color: #777;
}

.doc u {
    text-decoration: underline dotted #999;
}

.doc h3 {
    margin: 17px 0 3px 1px;
    font-size: 12px;
    font-weight: 500;
    line-height: 18px;
}

.caret {
    width: 5px;
    height: 10px;
    margin-left: 33px;
    vertical-align: top;
    fill: none;
    stroke: #999;
}

.handle {
    position: absolute;
    left: -22px;
    display: flex;
    gap: 5px;
    color: #aaa;
}

.outline {
    position: absolute;
    right: 18px;
    top: 89px;
    display: flex;
    flex-direction: column;
    justify-content: space-between;
    height: 174px;
}

.outline i {
    width: 9px;
    height: 1px;
    background: #ddd;
}

.outline .here {
    background: #222;
}

.peek-thumb {
    position: absolute;
    right: 3px;
    top: 342px;
    width: 4px;
    height: 76px;
    border-radius: 2px;
    background: #ccc;
}
```
